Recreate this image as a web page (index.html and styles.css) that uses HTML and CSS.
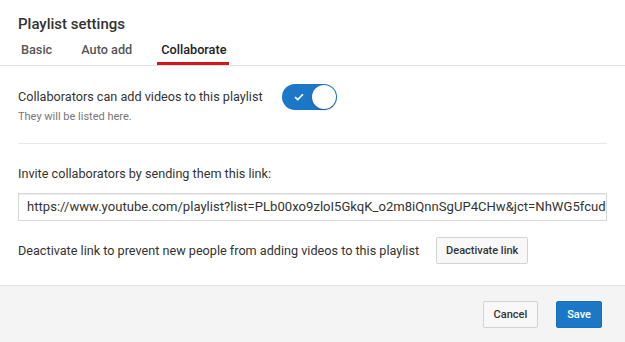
FILE: index.html
```html
<!DOCTYPE html>
<html lang="en">
<head>
    <meta charset="UTF-8">
    <title>Playlist settings</title>
    <link rel="stylesheet" href="styles.css">
</head>
<body>

    <div class="dialog">
        <!-- Header with tabs -->
        <div class="dialog-header">
            <h2 class="title">Playlist settings</h2>
            <div class="tabs">
                <span class="tab">Basic</span>
                <span class="tab">Auto add</span>
                <span class="tab active">Collaborate</span>
            </div>
        </div>

        <div class="dialog-body">
            <div class="section toggle-row">
                <div>
                    <p class="label">Collaborators can add videos to this playlist</p>
                    <p class="hint">They will be listed here.</p>
                </div>
                <div class="toggle">
                    <svg class="check" width="10" height="8" viewBox="0 0 10 8">
                        <path d="M1 4.2 L3.7 6.6 L9 1.2" fill="none" stroke="#fff" stroke-width="1.6"/>
                    </svg>
                    <span class="knob"></span>
                </div>
            </div>

            <div class="section invite">
                <p class="label">Invite collaborators by sending them this link:</p>
                <div class="link-box">https://www.youtube.com/playlist?list=PLb00xo9zloI5GkqK_o2m8iQnnSgUP4CHw&amp;jct=NhWG5fcud0Xk2p</div>
                <div class="deactivate-row">
                    <p class="label">Deactivate link to prevent new people from adding videos to this playlist</p>
                    <button class="btn">Deactivate link</button>
                </div>
            </div>
        </div>

        <div class="dialog-footer">
            <button class="btn wide">Cancel</button>
            <button class="btn wide primary">Save</button>
        </div>
    </div>

</body>
</html>
```

FILE: styles.css
```css
body {
    margin: 0;
    font-family: Roboto, Arial, sans-serif;
    background: #fff;
    color: #333;
}

p {
    margin: 0;
}

.dialog {
    width: 625px;
    height: 342px;
    display: flex;
    flex-direction: column;
}

/* Header */
.dialog-header {
    padding: 15px 18px 0 18px;
    border-bottom: 1px solid #e2e2e2;
}

.title {
    margin: 0;
    font-size: 15px;
    font-weight: 500;
    color: #333;
    line-height: 18px;
}

.tabs {
    display: flex;
    margin-top: 6px;
}

.tab {
    font-size: 12.7px;
    font-weight: 500;
    color: #555;
    padding: 3px 3px 5px 4px;
    margin-right: 22px;
    line-height: 15px;
    border-bottom: 3px solid transparent;
}

.tab:first-child {
    margin-left: -1px;
}

.tab.active {
    color: #222;
    border-bottom-color: #cc181e;
}

/* Body */
.dialog-body {
    padding: 0 18px;
    flex: 1;
}

.section {
    border-bottom: 1px solid #e8e8e8;
}

.label {
    font-size: 12.65px;
    color: #333;
    line-height: 16px;
}

.hint {
    font-size: 11px;
    color: #767676;
    margin-top: 5px;
}

.toggle-row {
    display: flex;
    align-items: flex-start;
    gap: 19px;
    padding: 23px 0 20px 0;
}

.toggle {
    width: 55px;
    height: 26px;
    border-radius: 13px;
    background: #1c78c7;
    display: flex;
    align-items: center;
    justify-content: space-between;
    box-sizing: border-box;
    padding: 0 1px 0 12px;
    margin-top: -5px;
}

.knob {
    width: 24px;
    height: 24px;
    border-radius: 50%;
    background: #fff;
    box-shadow: 0 1px 2px rgba(0, 0, 0, 0.3);
}

.invite {
    border-bottom: none;
    padding-top: 22px;
}

.link-box {
    margin-top: 11px;
    height: 28px;
    box-sizing: border-box;
    border: 1px solid #d8d8d8;
    padding: 0 8px;
    font-size: 13.1px;
    line-height: 26px;
    color: #333;
    white-space: nowrap;
    overflow: hidden;
    box-shadow: inset 0 1px 1px #eee;
}

.deactivate-row {
    display: flex;
    align-items: center;
    gap: 17px;
    margin-top: 16px;
}

/* Buttons */
.btn {
    font-family: Roboto, Arial, sans-serif;
    font-size: 11px;
    font-weight: 500;
    color: #333;
    background: #f8f8f8;
    border: 1px solid #d3d3d3;
    border-radius: 2px;
    height: 27px;
    padding: 0 9px;
    cursor: pointer;
}

.btn.wide {
    padding: 0 10px;
}

.btn.primary {
    background: #1c78c7;
    border-color: #1a6fb8;
    color: #fff;
}

/* Footer */
.dialog-footer {
    background: #f4f4f4;
    border-top: 1px solid #e0e0e0;
    height: 56px;
    display: flex;
    align-items: center;
    justify-content: flex-end;
    gap: 18px;
    padding: 0 23px 0 18px;
}
```
